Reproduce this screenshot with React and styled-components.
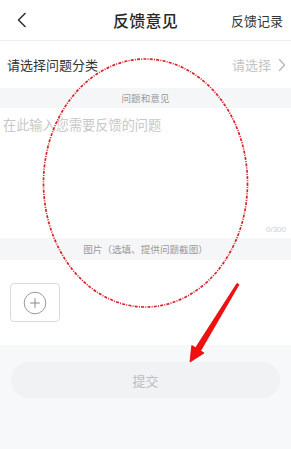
import React from "react";
import styled, { createGlobalStyle } from "styled-components";

const Global = createGlobalStyle`
  html, body { margin: 0; padding: 0; background: #f7f8fa; }
  body { font-family: "Noto Sans CJK SC", "Noto Sans", sans-serif; }
  * { box-sizing: border-box; }
`;

const Page = styled.div`
  position: relative;
  width: 291px;
  height: 449px;
  background: #f7f8fa;
  display: flex;
  flex-direction: column;
  overflow: hidden;
`;

const Header = styled.header`
  height: 41px;
  background: #fff;
  border-bottom: 1px solid #eeeeee;
  display: grid;
  grid-template-columns: 60px 1fr 60px;
  align-items: center;
`;

const BackBtn = styled.div`
  padding-left: 16px;
  display: flex;
  align-items: center;
  height: 100%;
`;

const Title = styled.h1`
  margin: 0;
  text-align: center;
  font-size: 16px;
  font-weight: 500;
  color: #2a2a2a;
  letter-spacing: 0.3px;
`;

const HeaderLink = styled.span`
  font-size: 13px;
  color: #333;
  text-align: right;
  padding-right: 8px;
  white-space: nowrap;
`;

const Row = styled.div`
  height: 47px;
  background: #fff;
  display: flex;
  align-items: center;
  justify-content: space-between;
  padding: 0 5px 0 7px;
`;

const RowLabel = styled.span`
  font-size: 13px;
  color: #333;
`;

const RowValue = styled.span`
  display: flex;
  align-items: center;
  gap: 7px;
  font-size: 13px;
  color: #c4c4c4;
`;

const SectionLabel = styled.div`
  height: ${(p) => p.$h}px;
  background: #f5f6f8;
  display: flex;
  align-items: center;
  justify-content: center;
  font-size: 9.6px;
  color: #999;
`;

const TextBox = styled.div`
  height: 130px;
  background: #fff;
  display: flex;
  flex-direction: column;
  justify-content: space-between;
  padding: 7px 5px 4px 3px;
`;

const Placeholder = styled.div`
  font-size: 13.2px;
  color: #c8c8c8;
  line-height: 20px;
`;

const Counter = styled.div`
  align-self: flex-end;
  font-size: 8px;
  color: #cfcfcf;
  font-family: "Liberation Sans", sans-serif;
`;

const UploadArea = styled.div`
  height: 85px;
  background: #fff;
  padding: 23px 10px;
`;

const AddBox = styled.div`
  width: 50px;
  height: 39px;
  border: 1px solid #dcdcdc;
  border-radius: 4px;
  display: flex;
  align-items: center;
  justify-content: center;
`;

const Footer = styled.div`
  flex: 1;
  padding: 17px 11px 0;
`;

const SubmitBtn = styled.div`
  height: 36px;
  border-radius: 18px;
  background: #f1f2f4;
  color: #bdbdbd;
  font-size: 13px;
  display: flex;
  align-items: center;
  justify-content: center;
`;

const Overlay = styled.svg`
  position: absolute;
  left: 0;
  top: 0;
  pointer-events: none;
`;

export default function App() {
  return (
    <Page>
      <Global />
      <Header>
        <BackBtn>
          <svg width="12" height="16" viewBox="0 0 12 16">
            <path d="M9 1.5 L2.5 8 L9 14.5" fill="none" stroke="#333" strokeWidth="1.6" strokeLinecap="round" strokeLinejoin="round" />
          </svg>
        </BackBtn>
        <Title>反馈意见</Title>
        <HeaderLink>反馈记录</HeaderLink>
      </Header>
      <Row>
        <RowLabel>请选择问题分类</RowLabel>
        <RowValue>
          请选择
          <svg width="8" height="14" viewBox="0 0 8 14">
            <path d="M1.5 1.5 L6.5 7 L1.5 12.5" fill="none" stroke="#b5b5b5" strokeWidth="1.3" strokeLinecap="round" strokeLinejoin="round" />
          </svg>
        </RowValue>
      </Row>
      <SectionLabel $h={20}>问题和意见</SectionLabel>
      <TextBox>
        <Placeholder>在此输入您需要反馈的问题</Placeholder>
        <Counter>0/300</Counter>
      </TextBox>
      <SectionLabel $h={22}>图片（选填、提供问题截图）</SectionLabel>
      <UploadArea>
        <AddBox>
          <svg width="24" height="24" viewBox="0 0 24 24">
            <circle cx="12" cy="12" r="10.8" fill="none" stroke="#9a9a9a" strokeWidth="1" />
            <path d="M12 7.2 V16.8 M7.2 12 H16.8" stroke="#8a8a8a" strokeWidth="1" />
          </svg>
        </AddBox>
      </UploadArea>
      <Footer>
        <SubmitBtn>提交</SubmitBtn>
      </Footer>
      <Overlay width="291" height="449" viewBox="0 0 291 449">
        <ellipse cx="145.5" cy="183" rx="102" ry="124" fill="none" stroke="#d8232a" strokeWidth="1.7" strokeDasharray="3 1.2 1 1.2" />
        <polygon
          points="239,284.6 237,283.4 195.6,347.8 191.8,345.5 190,362 204,353 200.6,350.8"
          fill="#f01010"
          stroke="#e00000"
          strokeWidth="0.8"
          strokeLinejoin="round"
        />
      </Overlay>
    </Page>
  );
}
